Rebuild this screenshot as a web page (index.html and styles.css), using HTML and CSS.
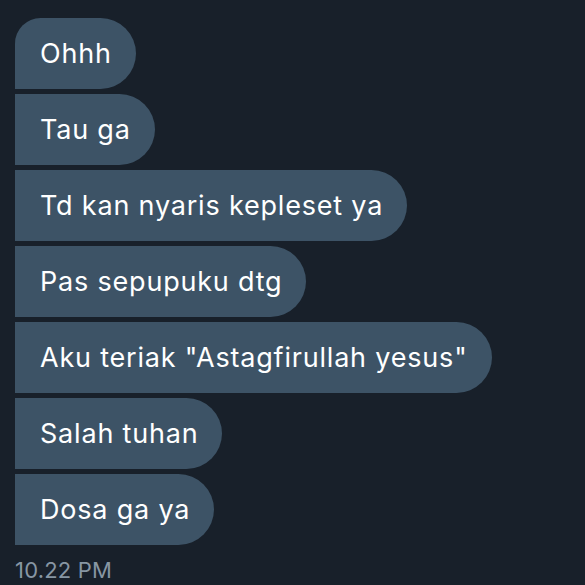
FILE: index.html
```html
<!DOCTYPE html>
<html lang="id">
<head>
    <meta charset="UTF-8">
    <title>Pesan</title>
    <link rel="stylesheet" href="styles.css">
</head>
<body>
    <div class="chat">
        <div class="bubble">Ohhh</div>
        <div class="bubble">Tau ga</div>
        <div class="bubble">Td kan nyaris kepleset ya</div>
        <div class="bubble">Pas sepupuku dtg</div>
        <div class="bubble">Aku teriak "Astagfirullah yesus"</div>
        <div class="bubble">Salah tuhan</div>
        <div class="bubble">Dosa ga ya</div>
        <div class="time">10.22 PM</div>
    </div>
</body>
</html>
```
FILE: styles.css
```css
* {
    margin: 0;
    padding: 0;
    box-sizing: border-box;
}

body {
    background: #18202a;
    font-family: Inter, 'Noto Sans', sans-serif;
    width: 585px;
    height: 585px;
    overflow: hidden;
}

.chat {
    display: flex;
    flex-direction: column;
    align-items: flex-start;
    gap: 5px;
    padding: 18px 0 0 15px;
}

.bubble {
    background: #3d5366;
    color: #ffffff;
    font-size: 27px;
    letter-spacing: 0.8px;
    height: 71px;
    line-height: 71px;
    padding: 0 24px 0 25px;
    border-radius: 0 36px 36px 0;
}

.bubble:first-child {
    border-top-left-radius: 26px;
}

.time {
    color: #8796a3;
    font-size: 22px;
    letter-spacing: 0.2px;
    margin-top: 7px;
}
```
